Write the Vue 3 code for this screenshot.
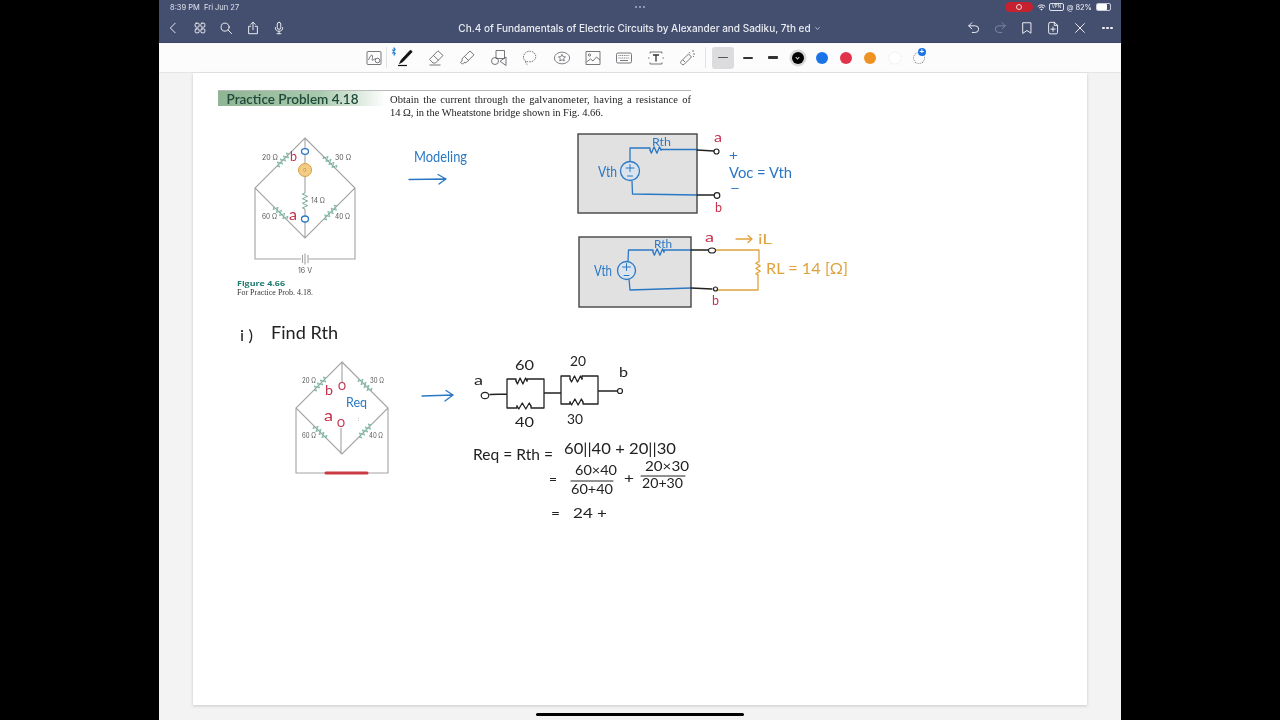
<script setup>
const title = 'Ch.4 of Fundamentals of Electric Circuits by Alexander and Sadiku, 7th ed'
const colors = ['black', 'blue', 'red', 'orange', 'white']
const thick = ['t1', 't2', 't3']

// zig-zag resistor between two points, for the drawn circuits
function zig(x1, y1, x2, y2, n = 6, amp = 2) {
  const dx = x2 - x1, dy = y2 - y1, len = Math.hypot(dx, dy)
  const nx = -dy / len, ny = dx / len
  const pts = [`${x1},${y1}`]
  for (let i = 0; i < n; i++) {
    const t = (i + 0.5) / n, s = i % 2 ? -amp : amp
    pts.push(`${(x1 + dx * t + nx * s).toFixed(1)},${(y1 + dy * t + ny * s).toFixed(1)}`)
  }
  pts.push(`${x2},${y2}`)
  return pts.join(' ')
}

const greenRes = [
  [277, 166, 289, 154], [324, 156, 336, 168], [274, 207, 287, 219], [324, 219, 337, 206],
  [314, 390, 326, 378], [359, 379, 371, 391], [314, 426, 326, 438], [359, 437, 371, 425]
].map(r => zig(...r, 8, 2.6))

const grayRes = zig(305, 193, 305, 209, 7, 2.6)
const blueRes = [zig(650, 150, 661, 150, 4, 3.2), zig(653, 252, 664, 252, 4, 3.2)]
const darkRes = [zig(516, 381, 527, 381, 4, 3), zig(517, 406, 531, 406, 4, 3), zig(570, 379, 582, 379, 4, 3), zig(570, 402, 583, 402, 4, 3)]
const orangeRes = zig(758, 262, 758, 275, 5, 2.2)

// printed labels in the textbook figures
const printed = [
  [262, 160, 16, '20 Ω'], [335, 160, 16, '30 Ω'], [262, 219, 15, '60 Ω'], [335, 219, 15, '40 Ω'],
  [311, 203, 14, '14 Ω'], [298, 273, 14, '16 V'],
  [302, 383, 14, '20 Ω'], [370, 383, 14, '30 Ω'], [302, 438, 14, '60 Ω'], [369, 438, 14, '40 Ω']
]

// handwriting: x, baseline y, width, size, colour class, text
const notes = [
  [414, 162, 53, 15, 'blue', 'Modeling'],
  [652, 146, 19, 12, 'blue', 'Rth'], [598, 177, 19, 15, 'blue', 'Vth'],
  [729, 178, 63, 15, 'blue', 'Voc = Vth'], [729, 160, 9, 13, 'blue', '+'], [730, 193, 10, 13, 'blue', '−'],
  [654, 248, 18, 12, 'blue', 'Rth'], [594, 276, 18, 15, 'blue', 'Vth'],
  [346, 407, 21, 13, 'blue', 'Req'],
  [714, 142, 8, 13, 'red', 'a'], [715, 212, 7, 13, 'red', 'b'],
  [705, 242, 9, 13, 'red', 'a'], [712, 305, 7, 13, 'red', 'b'],
  [290, 161, 7, 14, 'red', 'b'], [289, 220, 8, 15, 'red', 'a'],
  [325, 395, 8, 14, 'red', 'b'], [324, 421, 9, 15, 'red', 'a'],
  [758, 244, 14, 13, 'orange', 'iL'], [766, 274, 82, 15, 'orange', 'RL = 14 [Ω]'],
  [240, 341, 13, 16, 'ink', 'i )'], [271, 339, 67, 17, 'ink', 'Find Rth'],
  [474, 385, 9, 13, 'ink', 'a'], [619, 377, 9, 14, 'ink', 'b'],
  [515, 370, 19, 14, 'ink', '60'], [570, 366, 16, 13, 'ink', '20'],
  [515, 427, 19, 14, 'ink', '40'], [567, 424, 16, 13, 'ink', '30'],
  [473, 460, 80, 16, 'ink', 'Req = Rth ='], [564, 454, 112, 15, 'ink', '60||40 + 20||30'],
  [549, 483, 8, 12, 'ink', '='], [575, 475, 42, 14, 'ink', '60×40'], [571, 494, 42, 14, 'ink', '60+40'],
  [624, 483, 10, 14, 'ink', '+'], [645, 471, 44, 13, 'ink', '20×30'], [642, 488, 41, 13, 'ink', '20+30'],
  [551, 517, 9, 12, 'ink', '='], [573, 518, 34, 14, 'ink', '24 +']
]
</script>

<template>
  <div class="screen">
    <div class="tablet">
      <header class="head">
        <div class="status">
          <span class="clock">8:39 PM&nbsp;&nbsp;Fri Jun 27</span>
          <span class="dots"><i></i><i></i><i></i></span>
          <div class="sys">
            <span class="rec"><span class="rec-dot"></span></span>
            <svg class="wifi" viewBox="0 0 12 9"><path d="M1 3.2a7 7 0 0 1 10 0M2.8 5.1a4.5 4.5 0 0 1 6.4 0" fill="none" stroke="#fff" stroke-width="1.3"/><path d="M6 8.5 4.4 6.8a2.3 2.3 0 0 1 3.2 0z" fill="#fff"/></svg>
            <span class="vpn">VPN</span>
            <span class="at">@</span>
            <span class="pct">82%</span>
            <span class="batt"><span class="level"></span></span>
          </div>
        </div>
        <nav class="nav">
          <div class="nav-left">
            <svg class="ic" viewBox="0 0 16 16"><path d="M10.5 2.5 5 8l5.5 5.5"/></svg>
            <svg class="ic" viewBox="0 0 16 16"><rect x="2.5" y="2.5" width="4.5" height="4.5" rx="1.2"/><rect x="9" y="2.5" width="4.5" height="4.5" rx="1.2"/><rect x="2.5" y="9" width="4.5" height="4.5" rx="1.2"/><rect x="9" y="9" width="4.5" height="4.5" rx="1.2"/></svg>
            <svg class="ic" viewBox="0 0 16 16"><circle cx="7" cy="7" r="4.6"/><path d="m10.4 10.4 4 4"/></svg>
            <svg class="ic" viewBox="0 0 16 16"><path d="M5.5 6H3v8.500h10V6h-2.500M8 10V1.500M5.500 3.800 8 1.300l2.500 2.500"/></svg>
            <svg class="ic" viewBox="0 0 16 16"><rect x="6" y="1.5" width="4" height="8" rx="2"/><path d="M3.800 7.500a4.200 4.200 0 0 0 8.400 0M8 11.700v2.800M5.800 14.500h4.400"/></svg>
          </div>
          <div class="doc-title">{{ title }}<svg class="caret" viewBox="0 0 8 6"><path d="m1.500 1.500 2.500 2.500 2.500-2.500"/></svg></div>
          <div class="nav-right">
            <svg class="ic" viewBox="0 0 16 16"><path d="M5.500 2 2 5.500 5.500 9M2 5.500h7.500a3.800 3.800 0 0 1 0 7.600H6"/></svg>
            <svg class="ic dim" viewBox="0 0 16 16"><path d="M10.500 2 14 5.500 10.500 9M14 5.500H6.500a3.800 3.800 0 0 0 0 7.600H10"/></svg>
            <svg class="ic" viewBox="0 0 16 16"><path d="M3.500 2h9v12L8 10.800 3.500 14z"/></svg>
            <svg class="ic" viewBox="0 0 16 16"><path d="M3 3.200A1.700 1.700 0 0 1 4.700 1.500h5L13.200 5v8a1.700 1.700 0 0 1-1.700 1.700h-6.800A1.700 1.700 0 0 1 3 13zM9.500 1.500V5h3.700M8 6.800v5M5.500 9.300h5"/></svg>
            <svg class="ic" viewBox="0 0 16 16"><path d="m3 3 10 10M13 3 3 13"/></svg>
            <span class="more"><i></i><i></i><i></i></span>
          </div>
        </nav>
      </header>

      <div class="toolbar">
        <button class="tool first">
          <svg viewBox="0 0 18 18"><rect x="2" y="2.500" width="14" height="13" rx="1"/><path d="M3.500 11c2-5 3.500-6 4-4s-1.500 5 .5 4 1.500-1.500 3-1"/><circle cx="12.500" cy="11.500" r="2.300"/></svg>
        </button>
        <span class="sep"></span>
        <button class="tool pen">
          <svg class="bt" viewBox="0 0 6 10"><path d="m1 2.800 3.500 4.400L3 9V1l1.500 1.800L1 7.200"/></svg>
          <svg viewBox="0 0 18 18"><path class="solid" d="M14 1.500c1.200-.4 2.200.5 1.800 1.800L7 12.500l-3.500 2 1.800-3.600z"/><path d="M2 16.500h9" class="under"/></svg>
        </button>
        <button class="tool">
          <svg viewBox="0 0 18 18"><path d="m11 1.800 5 4.700-7.500 7.500H6L2.500 10.400zM6.500 6.500l5 4.800M2.500 16h11"/></svg>
        </button>
        <button class="tool">
          <svg viewBox="0 0 18 18"><path d="m12 2 4 3.800-8 8-2-.3-1.500 1.700-2-2 1.700-1.500-.2-2zM6.500 7.500l4.300 4.300"/></svg>
        </button>
        <button class="tool">
          <svg viewBox="0 0 18 18"><rect x="6" y="1.500" width="8.500" height="8"/><circle cx="5" cy="12" r="3.500"/><path d="M16 8v8.500l-6-4.200z"/></svg>
        </button>
        <button class="tool">
          <svg viewBox="0 0 18 18"><path d="M5 12.500C2.500 11 2 8.500 2.800 6.300 3.800 3.500 6.500 2 9.500 2.300c3 .3 5.300 2.500 5.300 5.300 0 3-2.800 5.200-6 5.200-1.500 0-3-.2-3.800-.3-1.200 1 .2 2.800 2 3.500" stroke-dasharray="1.500 .9"/></svg>
        </button>
        <button class="tool">
          <svg viewBox="0 0 20 18"><ellipse cx="10" cy="9" rx="8.500" ry="6.500"/><path d="m10 5 1.200 2.500 2.700.3-2 1.800.6 2.700-2.500-1.400-2.500 1.400.6-2.700-2-1.800 2.700-.3z"/></svg>
        </button>
        <button class="tool">
          <svg viewBox="0 0 18 18"><rect x="2" y="2.500" width="14" height="13"/><circle cx="5.500" cy="6" r="1.100"/><path d="m2.500 13 4-3 2.500 2 3.500-4 3.500 3"/></svg>
        </button>
        <button class="tool">
          <svg viewBox="0 0 18 18"><rect x="1.500" y="4" width="15" height="10" rx="1.500"/><path d="M3.500 6.500h11M3.500 9h11" stroke-dasharray="1 .8"/><path d="M5 11.500h8"/></svg>
        </button>
        <button class="tool">
          <svg viewBox="0 0 18 18"><path d="M3 4.500V3h12v1.500M3 13.500V15h12v-1.500M1 9h1.500M15.500 9H17"/><path class="t-mark" d="M6 6h6M9 6v6.500"/></svg>
        </button>
        <button class="tool">
          <svg viewBox="0 0 18 18"><path d="m10.500 5 3 3-7.500 7.500a1.500 1.500 0 0 1-2-.1l-1-1a1.500 1.500 0 0 1 0-2zM5 11l2 2M15 1v2M11 3l1 1.300M17 5h-2M15 7l1 1"/></svg>
        </button>
        <span class="sep last"></span>
        <button v-for="(t, i) in thick" :key="t" class="thick" :class="[t, { on: i === 0 }]"><span></span></button>
        <span class="gap"></span>
        <button v-for="c in colors" :key="c" class="color"><span class="dot" :class="c"></span></button>
        <button class="color add"><span class="ring"></span><span class="plus">+</span></button>
      </div>

      <main class="canvas">
        <div class="page">
          <svg class="drawing" viewBox="193 73 894 632">
            <!-- Book excerpt -->
            <defs>
              <linearGradient id="band" x1="0" x2="1" y1="0" y2="0">
                <stop offset="0" stop-color="#8fb594"/><stop offset=".6" stop-color="#a9c9ad"/><stop offset="1" stop-color="#ffffff"/>
              </linearGradient>
            </defs>
            <rect x="218" y="91" width="168" height="15" fill="url(#band)"/>
            <line x1="218" x2="691" y1="90.500" y2="90.500" class="rule"/>
            <text x="226.500" y="103.500" class="bk-head" textLength="132" lengthAdjust="spacingAndGlyphs">Practice Problem 4.18</text>
            <text x="390" y="103" class="bk-body wide" textLength="301" lengthAdjust="spacing">Obtain the current through the galvanometer, having a resistance of</text>
            <text x="390" y="116" class="bk-body" textLength="213" lengthAdjust="spacing">14 Ω, in the Wheatstone bridge shown in Fig. 4.66.</text>
            <text x="237" y="286" class="bk-fig" textLength="48" lengthAdjust="spacingAndGlyphs">Figure 4.66</text>
            <text x="237" y="295" class="bk-cap" textLength="76" lengthAdjust="spacingAndGlyphs">For Practice Prob. 4.18.</text>

            <!-- Bridge 1 -->
            <path class="wire" d="M305 138 355 188 305 238 255 188zM255 188V259H301M309 259H355V188M305 138V163M305 177V193M305 209V238"/>
            <path class="wire" d="M302.500 255V263M305 253.500V264.500M308 255V263"/>
            <circle cx="305" cy="170" r="6.500" class="gal"/>
            <text x="305" y="172" class="gal-t">G</text>
            <polyline :points="grayRes" class="res-g"/>

            <!-- Bridge 2 -->
            <path class="wire" d="M342 362 388 408 342 454 296 408zM296 408V473H388V408M342 362V385M341 428V454"/>
            <line x1="326" x2="367" y1="473" y2="473" class="redbar"/>

            <polyline v-for="p in greenRes" :key="p" :points="p" class="res-g green"/>
            <text v-for="l in printed" :key="l[3] + l[0] + l[1]" :x="l[0]" :y="l[1]" class="lbl" :textLength="l[2]" lengthAdjust="spacingAndGlyphs">{{ l[3] }}</text>

            <!-- Blue and red terminals on the book figure -->
            <ellipse cx="305" cy="151.500" rx="3.500" ry="2.800" class="term-b"/>
            <ellipse cx="305" cy="219" rx="3.500" ry="3" class="term-b"/>
            <ellipse cx="342" cy="386" rx="3" ry="3.500" class="term-r"/>
            <ellipse cx="341" cy="423" rx="3" ry="3.500" class="term-r"/>

            <!-- Modeling and other arrows -->
            <path class="hand-b" d="M409 179.500 446 179M438 174.500 446 179 439 184"/>
            <path class="hand-b" d="M422 396 453 395M446 390.500 453 395 445 401"/>

            <!-- Thevenin circuit 1 -->
            <rect x="578" y="134" width="119" height="79" class="box"/>
            <path class="hand-b" d="M630 161V148H650V150M661 150 661 149.500H697M632 181 632.500 194 697 195"/>
            <polyline class="hand-b" :points="blueRes[0]"/>
            <circle cx="630" cy="171" r="9.500" class="src"/>
            <path class="hand-b thin" d="M626 168h8M630 164.500v7M627.500 176h5"/>
            <path class="hand-k" d="M697 150 714 151M697 195 714 195"/>
            <circle cx="716.500" cy="151.500" r="2.500" class="term-k"/>
            <circle cx="717" cy="195.500" r="2.800" class="term-k"/>

            <!-- Thevenin circuit 2 -->
            <rect x="579" y="237" width="112" height="70" class="box"/>
            <path class="hand-b" d="M628 262 628.500 250H653V252M664 252V250H691M629 279 630 290 691 288"/>
            <polyline class="hand-b" :points="blueRes[1]"/>
            <circle cx="626.500" cy="270.500" r="9" class="src"/>
            <path class="hand-b thin" d="M622.500 267h8M626.500 263.500v7M624 275.500h5"/>
            <path class="hand-k" d="M691 250 708 250M691 288 712 289"/>
            <path class="hand-o" d="M716 250H759V262M758 275V290L718 290"/>
            <polyline class="hand-o" :points="orangeRes"/>
            <path class="hand-o" d="M736 239 752 239M748 235.500 752 239 748 242.500"/>
            <ellipse cx="712" cy="250.500" rx="3.500" ry="2.500" class="term-k"/>
            <circle cx="715.500" cy="289" r="2" class="term-k"/>

            <!-- Series-parallel network -->
            <path class="hand-k" d="M490 394.500 507 394M507 379V408H517M531 408H544V379H527M516 379H507M516 379V381M527 379V381M517 406V408M531 406V408M544 393 561 393M561 376V404H570M583 404H598V376H582M570 376H561M570 376V379M582 376V379M570 402V404M583 402V404M598 391 617 391"/>
            <polyline v-for="p in darkRes" :key="p" :points="p" class="hand-k"/>
            <ellipse cx="485" cy="395.500" rx="3.800" ry="3.200" class="term-k"/>
            <circle cx="620" cy="391" r="2.500" class="term-k"/>
            <path class="hand-k thin" d="M571 481H613M641 476H685"/>

            <!-- Handwritten notes -->
            <text v-for="n in notes" :key="n[5] + n[0]" :x="n[0]" :y="n[1]" class="note" :class="n[4]" :font-size="n[3]" :textLength="n[2]" lengthAdjust="spacingAndGlyphs">{{ n[5] }}</text>
            <text x="357.500" y="421" class="tick">:</text>
          </svg>
        </div>
      </main>
      <span class="home"></span>
    </div>
  </div>
</template>

<style scoped>
.screen {
  width: 1280px;
  height: 720px;
  background: #000;
  display: flex;
  justify-content: center;
  overflow: hidden;
}
.tablet {
  position: relative;
  width: 962px;
  height: 720px;
  display: flex;
  flex-direction: column;
  background: #f3f3f4;
  font-family: Inter, "Liberation Sans", sans-serif;
  filter: blur(0.3px);
}
.head {
  height: 42px;
  background: #444f6f;
  color: #eef0f5;
  display: flex;
  flex-direction: column;
  border-bottom: 1px solid #3b4563;
  box-sizing: content-box;
  flex: none;
}
.status {
  height: 14px;
  display: flex;
  justify-content: space-between;
  align-items: center;
  position: relative;
  padding: 0 10px 0 11px;
  font-size: 7.500px;
}
.clock { color: #dfe3ec; }
.dots {
  position: absolute;
  left: 476px;
  top: 6px;
  display: flex;
  gap: 2px;
}
.dots i { width: 2px; height: 2px; border-radius: 50%; background: #aab1c4; }
.sys { display: flex; align-items: center; }
.rec {
  width: 28px;
  height: 10px;
  background: #c5212f;
  border-radius: 5px;
  display: flex;
  align-items: center;
  justify-content: center;
  margin-right: 4px;
}
.rec-dot {
  width: 4px;
  height: 4px;
  background: #c5212f;
  border: 1.500px solid #f3d6d8;
  border-radius: 50%;
}
.wifi { width: 9px; height: 7px; margin-right: 3px; }
.vpn {
  font-size: 4.500px;
  border: 1px solid #dfe3ec;
  border-radius: 2px;
  padding: 0 1.500px;
  line-height: 6px;
  margin-right: 3px;
}
.at { font-size: 7px; margin-right: 2px; }
.pct { margin-right: 4px; font-size: 7.500px; }
.batt {
  width: 13px;
  height: 6px;
  border: 1px solid #c9cdd8;
  border-radius: 2px;
  display: block;
}
.level { display: block; width: 10px; height: 6px; background: #fff; border-radius: 1px; }
.nav {
  flex: 1;
  display: grid;
  grid-template-columns: 1fr auto 1fr;
  align-items: center;
  padding: 0 8px 0 7px;
}
.nav-left, .nav-right { display: flex; align-items: center; gap: 12.500px; }
.nav-right { justify-content: flex-end; }
.ic {
  width: 14px;
  height: 14px;
  fill: none;
  stroke: #eef0f5;
  stroke-width: 1.100;
  stroke-linecap: round;
  stroke-linejoin: round;
}
.ic.dim { stroke: #7d86a0; }
.doc-title {
  font-size: 10px;
  font-weight: 500;
  white-space: nowrap;
  color: #e9ecf2;
  display: flex;
  align-items: center;
}
.caret {
  width: 7px;
  height: 5px;
  margin-left: 3px;
  fill: none;
  stroke: #cfd4e0;
  stroke-width: 1;
}
.more { display: flex; gap: 1.600px; width: 11px; margin-left: 3px; }
.more i { width: 2.500px; height: 2.500px; background: #f2f4f8; border-radius: 50%; }

.toolbar {
  height: 29px;
  background: #fcfcfd;
  border-bottom: 1px solid #e6e6e8;
  display: flex;
  align-items: center;
  padding-left: 203px;
  flex: none;
}
.toolbar button {
  border: 0;
  padding: 0;
  background: none;
  display: flex;
  align-items: center;
  justify-content: center;
  height: 22px;
  flex: none;
}
.tool { width: 31.400px; position: relative; }
.tool.first { width: 24px; }
.tool svg {
  width: 18px;
  height: 18px;
  fill: none;
  stroke: #55565a;
  stroke-width: .8;
  stroke-linejoin: round;
}
.pen svg { stroke: #111; }
.solid { fill: #111; }
.under { stroke-width: 1.200; }
.t-mark { stroke-width: 1.300; stroke: #333; }
.tool svg.bt {
  position: absolute;
  left: 2px;
  top: 0;
  width: 6px;
  height: 9px;
  stroke: #2f86dc;
  stroke-width: 1.200;
}
.sep { width: 1px; height: 21px; background: #e3e3e5; margin-right: 2px; flex: none; }
.sep.last { margin: 0 6px 0 2px; }
.thick { width: 24.500px; border-radius: 2px; }
.thick.on { background: #dcdcde; width: 22px; margin-right: 2px; border-radius: 3px; }
.thick span { display: block; width: 10px; height: 1.500px; background: #555; border-radius: 1px; }
.thick.t2 span { height: 2px; background: #333; }
.thick.t3 span { height: 3px; background: #333; }
.gap { width: 0.500px; }
.color { width: 24.300px; }
.dot { width: 12px; height: 12px; border-radius: 50%; display: block; position: relative; }
.dot.black { background: #000; box-shadow: 0 0 0 2.500px #d9d9db; }
.dot.black::after {
  content: "";
  position: absolute;
  left: 4.500px;
  top: 4px;
  width: 2px;
  height: 2px;
  border-right: 1px solid #ddd;
  border-bottom: 1px solid #ddd;
  transform: rotate(45deg);
}
.dot.blue { background: #1a74e8; }
.dot.red { background: #e1344a; }
.dot.orange { background: #ee9322; }
.dot.white { background: #fff; box-shadow: 0 0 1px #ccc; }
.add { position: relative; }
.ring {
  width: 10px;
  height: 10px;
  border: 1.200px dotted #777;
  border-radius: 50%;
  display: block;
}
.plus {
  position: absolute;
  left: 11px;
  top: 1px;
  width: 8px;
  height: 8px;
  border-radius: 50%;
  background: #1a74e8;
  color: #fff;
  font-size: 8px;
  line-height: 8px;
  text-align: center;
  font-weight: 700;
}

.canvas {
  flex: 1;
  min-height: 0;
  padding: 0 34px 15px;
  display: flex;
}
.page {
  flex: 1;
  background: #fff;
  box-shadow: 0 1px 3px rgba(0, 0, 0, 0.18);
  min-width: 0;
}
.drawing { display: block; width: 100%; height: 100%; }

.rule { stroke: #b9b9b9; stroke-width: 1; }
.bk-head { font: 600 13px Lato, "Open Sans", sans-serif; fill: #1d4a3a; }
.bk-body { font: 10.500px "Liberation Serif", serif; fill: #222; }
.bk-body.wide { word-spacing: 1.300px; }
.bk-fig { font: 700 7.500px "Open Sans", sans-serif; fill: #1d7a6c; }
.bk-cap { font: 7.500px "Liberation Serif", serif; fill: #333; }
.lbl { font: 7px Inter, "Liberation Sans", sans-serif; fill: #555; }
.wire { fill: none; stroke: #a3a3a3; stroke-width: 1.100; }
.gal { fill: #f4cd85; stroke: #d49b45; stroke-width: 1; }
.gal-t { font: 4.500px Inter, sans-serif; fill: #b98a40; text-anchor: middle; }
.res-g { fill: none; stroke: #6f9f8c; stroke-width: .9; }
.res-g.green { stroke: #6fb39a; }
.redbar { stroke: #cc3b44; stroke-width: 3; stroke-linecap: round; }
.term-b { fill: #fff; stroke: #2a78c4; stroke-width: 1.300; }
.term-r { fill: #fff; stroke: #c5304c; stroke-width: 1.200; }
.term-k { fill: #fff; stroke: #222; stroke-width: 1.200; }
.box { fill: #e1e1e2; stroke: #444; stroke-width: 1.400; }
.src { fill: #dbe3ec; stroke: #2a78c4; stroke-width: 1.300; }
.hand-b, .hand-k, .hand-o { fill: none; stroke-width: 1.300; stroke-linecap: round; stroke-linejoin: round; }
.hand-b { stroke: #2a78c4; }
.hand-k { stroke: #222; }
.hand-o { stroke: #e0a23c; }
.thin { stroke-width: 1; }
.note { font-family: Lato, "Open Sans", sans-serif; font-weight: 400; }
.note.blue { fill: #2a78c4; }
.note.red { fill: #c5304c; }
.note.orange { fill: #e0a23c; }
.note.ink { fill: #222; }
.tick { font: 6px Inter, sans-serif; fill: #888; }

.home {
  position: absolute;
  left: 377px;
  bottom: 4px;
  width: 208px;
  height: 3px;
  background: #000;
  border-radius: 2px;
}
</style>
